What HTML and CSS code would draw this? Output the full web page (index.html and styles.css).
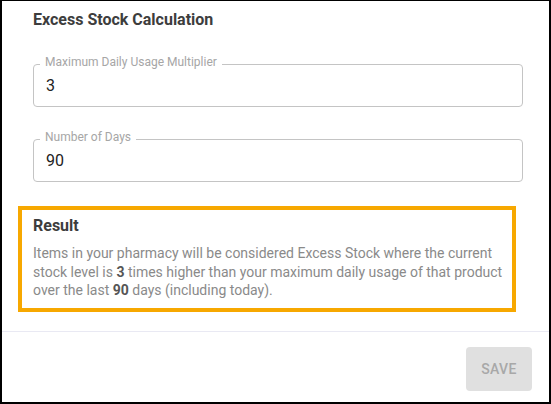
FILE: index.html
```html
<!DOCTYPE html>
<html>
<head>
<meta charset="utf-8">
<link rel="stylesheet" href="styles.css">
</head>
<body>
<div class="panel">
  <div class="main">
    <h2 class="title">Excess Stock Calculation</h2>
    <div class="field first">
      <span class="field-label">Maximum Daily Usage Multiplier</span>
      <span class="field-value">3</span>
    </div>
    <div class="field second">
      <span class="field-label">Number of Days</span>
      <span class="field-value">90</span>
    </div>
    <div class="result">
      <h3 class="result-title">Result</h3>
      <p class="result-text">Items in your pharmacy will be considered Excess Stock where the current stock level is <b>3</b> times higher than your maximum daily usage of that product over the last <b>90</b> days (including today).</p>
    </div>
  </div>
  <div class="footer">
    <button class="save">SAVE</button>
  </div>
</div>
</body>
</html>
```
FILE: styles.css
```css
html, body {
  margin: 0;
  padding: 0;
  background: #000;
}
body {
  font-family: Roboto, "Liberation Sans", sans-serif;
}
.panel {
  margin: 1px 2px 2px 2px;
  height: 401px;
  background: #fff;
  display: flex;
  flex-direction: column;
}
.main {
  height: 330px;
  padding: 7px 26px 0 31px;
  box-sizing: border-box;
}
.title {
  margin: 0;
  font-size: 16px;
  line-height: 24px;
  font-weight: 700;
  color: #3d3d3d;
}
.field {
  position: relative;
  height: 43px;
  box-sizing: border-box;
  border: 1px solid #c4c4c4;
  border-radius: 4px;
  display: flex;
  align-items: center;
  padding-left: 12px;
}
.field.first {
  margin-top: 32px;
}
.field.second {
  margin-top: 32px;
}
.field-label {
  position: absolute;
  top: -10px;
  left: 6px;
  padding: 0 5px;
  background: #fff;
  font-size: 12px;
  line-height: 14px;
  color: #a6a6a6;
}
.field-value {
  font-size: 16px;
  color: #222;
}
.result {
  margin: 24px 7px 0 -15px;
  border: 4px solid #f7a800;
  padding: 6px 1px 8px 11px;
}
.result-title {
  margin: 0;
  font-size: 16px;
  line-height: 20px;
  font-weight: 700;
  color: #3d3d3d;
}
.result-text {
  margin: 8px 0 0 0;
  font-size: 14px;
  line-height: 18.5px;
  color: #8a8a8a;
}
.result-text b {
  color: #555;
  font-weight: 700;
}
.footer {
  flex: 1;
  border-top: 1px solid #e9e9f3;
  display: flex;
  justify-content: flex-end;
  align-items: flex-start;
  padding: 15px 17px 0 0;
}
.save {
  width: 66px;
  height: 44px;
  border: none;
  border-radius: 4px;
  background: #e0e0e0;
  color: #a8a8a8;
  font-family: Roboto, "Liberation Sans", sans-serif;
  font-size: 14px;
  font-weight: 500;
  letter-spacing: 0.3px;
  padding: 0;
}
```
